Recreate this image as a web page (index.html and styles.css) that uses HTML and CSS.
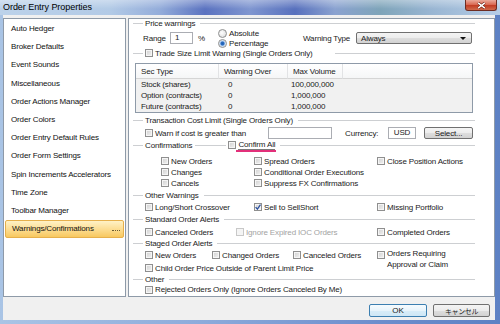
FILE: index.html
```html
<!DOCTYPE html>
<html lang="en">
<head>
    <meta charset="UTF-8">
    <title>Order Entry Properties</title>
    <link rel="stylesheet" href="styles.css">
</head>
<body>
<div class="window">
    <div class="titlebar">
        <span class="title">Order Entry Properties</span>
        <div class="close">
            <svg width="9" height="7" viewBox="0 0 9 7"><path d="M1.2 0.8 L7.8 6.2 M7.8 0.8 L1.2 6.2" stroke="#5a1a10" stroke-width="2.6"/><path d="M1.2 0.8 L7.8 6.2 M7.8 0.8 L1.2 6.2" stroke="#fff" stroke-width="1.5"/></svg>
        </div>
    </div>
    <div class="client">
        <div class="main">
            <ul class="nav">
                <li>Auto Hedger</li>
                <li>Broker Defaults</li>
                <li>Event Sounds</li>
                <li>Miscellaneous</li>
                <li>Order Actions Manager</li>
                <li>Order Colors</li>
                <li>Order Entry Default Rules</li>
                <li>Order Form Settings</li>
                <li>Spin Increments Accelerators</li>
                <li>Time Zone</li>
                <li>Toolbar Manager</li>
                <li class="sel">Warnings/Confirmations</li>
            </ul>
            <div class="panel">
                <div class="grp g-first"><span class="rule lead"></span><span class="grp-t">Price warnings</span><span class="rule"></span></div>
                <div class="row price">
                    <span class="w-range">Range</span>
                    <span class="field f-range">1</span>
                    <span class="w-pct">%</span>
                    <div class="radios">
                        <span class="opt"><span class="radio"></span>Absolute</span>
                        <span class="opt"><span class="radio on"></span>Percentage</span>
                    </div>
                    <span class="w-wt">Warning Type</span>
                    <div class="select">Always<span class="caret"></span></div>
                </div>
                <div class="grp"><span class="rule lead"></span><span class="cb"><span class="box"></span>Trade Size Limit Warning (Single Orders Only)</span><span class="rule far"></span></div>
                <table class="vol">
                    <colgroup><col class="k1"><col class="k2"><col class="k3"><col></colgroup>
                    <thead>
                        <tr><th>Sec Type</th><th>Warning Over</th><th>Max Volume</th><th></th></tr>
                    </thead>
                    <tbody>
                        <tr><td>Stock (shares)</td><td class="num">0</td><td class="vol-n">100,000,000</td><td></td></tr>
                        <tr><td>Option (contracts)</td><td class="num">0</td><td class="vol-n">1,000,000</td><td></td></tr>
                        <tr><td>Future (contracts)</td><td class="num">0</td><td class="vol-n">1,000,000</td><td></td></tr>
                    </tbody>
                </table>
                <div class="grp g-cost"><span class="rule lead"></span><span class="grp-t">Transaction Cost Limit (Single Orders Only)</span><span class="rule"></span></div>
                <div class="row cost">
                    <span class="cb w-warn"><span class="box"></span>Warn if cost is greater than</span>
                    <span class="field f-cost"></span>
                    <span class="w-cur">Currency:</span>
                    <span class="field f-usd">USD</span>
                    <span class="btn btn-sel">Select...</span>
                </div>
                <div class="grp"><span class="rule lead"></span><span class="grp-t">Confirmations</span><span class="rule mid"></span><span class="cb"><span class="box"></span><span class="mark">Confirm All</span></span><span class="rule"></span></div>
                <div class="row conf first">
                    <span class="cb c-a"><span class="box"></span>New Orders</span>
                    <span class="cb c-b"><span class="box"></span>Spread Orders</span>
                    <span class="cb"><span class="box"></span>Close Position Actions</span>
                </div>
                <div class="row conf">
                    <span class="cb c-a"><span class="box"></span>Changes</span>
                    <span class="cb c-b"><span class="box"></span>Conditional Order Executions</span>
                </div>
                <div class="row conf">
                    <span class="cb c-a"><span class="box"></span>Cancels</span>
                    <span class="cb c-b"><span class="box"></span>Suppress FX Confirmations</span>
                </div>
                <div class="grp g-other"><span class="rule lead"></span><span class="grp-t">Other Warnings</span><span class="rule"></span></div>
                <div class="row r-long">
                    <span class="cb o-a"><span class="box"></span>Long/Short Crossover</span>
                    <span class="cb o-b"><span class="box"><svg width="6" height="6" viewBox="0 0 6 6"><path d="M0.6 3.1 L2.4 5.1 L5.5 0.6" fill="none" stroke="#2a4f9e" stroke-width="1.3"/></svg></span>Sell to SellShort</span>
                    <span class="cb"><span class="box"></span>Missing Portfolio</span>
                </div>
                <div class="grp g-std"><span class="rule lead"></span><span class="grp-t">Standard Order Alerts</span><span class="rule"></span></div>
                <div class="row r-std">
                    <span class="cb s-a"><span class="box"></span>Canceled Orders</span>
                    <span class="cb s-b off"><span class="box"></span>Ignore Expired IOC Orders</span>
                    <span class="cb"><span class="box"></span>Completed Orders</span>
                </div>
                <div class="grp"><span class="rule lead"></span><span class="grp-t">Staged Order Alerts</span><span class="rule"></span></div>
                <div class="row r-staged">
                    <span class="cb t-a"><span class="box"></span>New Orders</span>
                    <span class="cb t-b"><span class="box"></span>Changed Orders</span>
                    <span class="cb t-c"><span class="box"></span>Canceled Orders</span>
                    <span class="cb two"><span class="box"></span><span>Orders Requiring<br>Approval or Claim</span></span>
                </div>
                <div class="row r-staged">
                    <span class="cb"><span class="box"></span>Child Order Price Outside of Parent Limit Price</span>
                </div>
                <div class="grp"><span class="rule lead"></span><span class="grp-t">Other</span><span class="rule"></span></div>
                <div class="row r-last">
                    <span class="cb"><span class="box"></span>Rejected Orders Only (Ignore Orders Canceled By Me)</span>
                </div>
            </div>
        </div>
        <div class="footer">
            <span class="btn btn-ok">OK</span>
            <span class="btn btn-cancel">キャンセル</span>
        </div>
    </div>
</div>
</body>
</html>
```

FILE: styles.css
```css
body {
    margin: 0;
    font-family: "Liberation Sans", "Noto Sans CJK JP", sans-serif;
    font-size: 8px;
    letter-spacing: -0.15px;
    color: #1b1b1b;
}
.window {
    width: 500px;
    height: 324px;
    display: flex;
    flex-direction: column;
    background: linear-gradient(90deg, #a9c4e5 0, #8dabdb 40%, #6d8ecd 75%, #5d81c4 100%);
}
.titlebar {
    flex: none;
    height: 15px;
    display: flex;
    justify-content: space-between;
    align-items: flex-start;
    background:
        linear-gradient(rgba(255,255,255,0.35), rgba(255,255,255,0) 60%),
        linear-gradient(90deg, #bcd2ea 0, #b2cae6 110px, #93acda 160px, #5a72c0 205px, #7f96d0 250px, #5770bd 295px, #8aa2d0 335px, #7ea4b9 380px, #98b5d2 430px, #b5cce6 500px);
}
.title {
    margin: 2px 0 0 3px;
    font-size: 9px;
    line-height: 11px;
    letter-spacing: -0.05px;
    color: #000;
}
.close {
    width: 32px;
    height: 11px;
    margin-right: 3px;
    box-sizing: border-box;
    border: 1px solid #6d2c22;
    border-top: none;
    border-radius: 0 0 3px 3px;
    background: linear-gradient(#eaa99a, #d8644d 50%, #c23e25 55%, #d06a4c);
    display: flex;
    align-items: center;
    justify-content: center;
}

.client {
    flex: none;
    height: 305px;
    margin: 0 5px 0 3px;
    padding-top: 3px;
    box-sizing: border-box;
    background: #f0f0f0;
    display: flex;
    flex-direction: column;
}
.main {
    display: flex;
    gap: 2px;
    height: 279px;
}
.nav {
    list-style: none;
    margin: 0;
    padding: 1px 0 0;
    width: 123px;
    flex: none;
    box-sizing: border-box;
    border: 1px solid #8e9aa8;
    background: #fff;
}
.nav li {
    height: 18.2px;
    line-height: 18.2px;
    padding-left: 7px;
    white-space: nowrap;
    color: #111;
}
.nav li.sel {
    position: relative;
    margin: 0 1px;
    padding-left: 6px;
    height: 16.2px;
    line-height: 16.2px;
    border: 1px solid #e6b04c;
    border-radius: 2px;
    background: linear-gradient(#fff2c6, #fcdc8f 55%, #f8c860);
}
.nav li.sel::after {
    content: "";
    position: absolute;
    right: 3px;
    top: 9px;
    width: 8px;
    border-top: 1px dotted #6a5a30;
}

.panel {
    flex: 1;
    box-sizing: border-box;
    border: 1px solid #8e9aa8;
    background: #fff;
    padding: 0 19px 0 4px;
}
.grp {
    display: flex;
    align-items: center;
    height: 10px;
    white-space: nowrap;
}
.g-first {
    height: 9px;
}
.rule {
    flex: 1;
    height: 0;
    border-top: 1px solid #cdcfd2;
    margin-left: 5px;
}
.rule.lead {
    flex: none;
    width: 10px;
    margin: 0 2px 0 0;
}
.rule.mid {
    flex: none;
    width: 31px;
    margin: 0 2px 0 3px;
}
.rule.far {
    margin-left: 22px;
}
.g-cost {
    margin-top: 2px;
}
.g-other {
    margin-top: 1.5px;
}
.g-std {
    margin-top: 1px;
}

.row {
    display: flex;
    align-items: center;
    padding-left: 12px;
    white-space: nowrap;
}
.row > * {
    flex: none;
}
.cb {
    display: inline-flex;
    align-items: center;
    gap: 2px;
}
.box {
    flex: none;
    width: 6px;
    height: 6px;
    border: 1px solid #8f8f8f;
    background: linear-gradient(135deg, #cfcfcf, #f3f3f3);
    box-shadow: inset 0 0 0 1px #f5f5f5;
    display: flex;
}
.cb.off {
    color: #a3a3a3;
}
.cb.off .box {
    border-color: #c8c8c8;
    background: #f4f4f4;
}
.mark {
    position: relative;
    border-bottom: 1px solid #7a7a7a;
    line-height: 9px;
}
.mark::after {
    content: "";
    position: absolute;
    left: -2px;
    right: -1px;
    bottom: -3px;
    height: 2px;
    background: #e2307a;
}

.price {
    height: 20px;
    padding-left: 10px;
}
.w-range {
    width: 27px;
}
.field {
    height: 12px;
    box-sizing: border-box;
    border: 1px solid #abadb3;
    background: #fff;
    line-height: 10px;
    padding-left: 4px;
}
.f-range {
    width: 23px;
}
.w-pct {
    width: 25px;
    box-sizing: border-box;
    padding-left: 5px;
}
.radios {
    width: 85px;
    display: flex;
    flex-direction: column;
}
.opt {
    height: 10px;
    display: flex;
    align-items: center;
    gap: 2px;
}
.radio {
    width: 7px;
    height: 7px;
    border-radius: 50%;
    border: 1px solid #8e8f8f;
    background: radial-gradient(circle at 40% 40%, #fff, #d6d6d6);
}
.radio.on {
    background: radial-gradient(circle, #1f5fb4 0, #2a6cc0 1.6px, #a9c9ef 2.4px, #f4f4f4 3.6px);
}
.w-wt {
    width: 53px;
}
.select {
    width: 116px;
    height: 12px;
    box-sizing: border-box;
    border: 1px solid #707070;
    border-radius: 2px;
    background: linear-gradient(#f4f4f4, #ececec 50%, #dedede 51%, #d2d2d2);
    display: flex;
    align-items: center;
    justify-content: space-between;
    padding: 0 5px 0 4px;
}
.caret {
    width: 0;
    height: 0;
    border-left: 3px solid transparent;
    border-right: 3px solid transparent;
    border-top: 3px solid #111;
}

.vol {
    border-collapse: separate;
    border-spacing: 0;
    border: 1px solid #8e9aa8;
    width: 338px;
    margin: 5px 0 0 2px;
    table-layout: fixed;
    background: #f1f1f1;
}
.vol col.k1 {
    width: 83px;
}
.vol col.k2 {
    width: 69px;
}
.vol col.k3 {
    width: 55px;
}
.vol th {
    height: 14px;
    padding: 0 0 0 5px;
    text-align: left;
    font-weight: normal;
    white-space: nowrap;
    background: linear-gradient(#fff, #f5f6f7);
    border-bottom: 1px solid #d5d5d5;
    border-right: 1px solid #e2e3e5;
}
.vol th:last-child {
    border-right: none;
}
.vol td {
    height: 11px;
    line-height: 11px;
    padding: 0 0 0 5px;
    white-space: nowrap;
}
.vol td.num {
    padding-left: 9px;
}
.vol td.vol-n {
    padding-left: 3px;
}

.cost {
    height: 14px;
    margin-top: 1px;
}
.w-warn {
    width: 123px;
}
.f-cost {
    width: 64px;
}
.w-cur {
    width: 43px;
    margin-left: 13px;
}
.f-usd {
    width: 28px;
    padding: 0;
    text-align: center;
}
.btn {
    height: 12px;
    box-sizing: border-box;
    border: 1px solid #707070;
    border-radius: 2px;
    background: linear-gradient(#f4f4f4, #ececec 50%, #dedede 51%, #d2d2d2);
    display: flex;
    align-items: center;
    justify-content: center;
}
.btn-sel {
    width: 49px;
    margin-left: 8px;
}

.conf {
    height: 11px;
    padding-left: 28px;
}
.conf.first {
    margin-top: 5.5px;
}
.c-a {
    width: 93px;
}
.c-b {
    width: 123px;
}
.r-long {
    height: 12px;
    margin-top: 1px;
}
.o-a {
    width: 109px;
}
.o-b {
    width: 123px;
}
.r-std {
    height: 12px;
    margin-top: 2px;
}
.s-a {
    width: 91px;
}
.s-b {
    width: 141px;
}
.r-staged {
    height: 12px;
    margin-top: 1px;
}
.t-a {
    width: 67px;
}
.t-b {
    width: 81px;
}
.t-c {
    width: 84px;
}
.cb.two {
    align-self: flex-start;
    align-items: flex-start;
    line-height: 10.5px;
}
.cb.two .box {
    margin-top: 1.5px;
}
.r-last {
    height: 11px;
}

.footer {
    flex: 1;
    display: flex;
    justify-content: flex-end;
    align-items: flex-start;
    gap: 6px;
    padding: 7px 5px 0 0;
}
.footer .btn {
    height: 13px;
}
.btn-ok {
    width: 58px;
    border-color: #3c7fb1;
    background: linear-gradient(#f6fbfe, #e8f4fb 50%, #d8edf9 51%, #cfe7f6);
}
.btn-cancel {
    width: 57px;
    font-size: 7px;
    letter-spacing: -0.4px;
    font-family: "Noto Sans CJK JP", sans-serif;
}
```
